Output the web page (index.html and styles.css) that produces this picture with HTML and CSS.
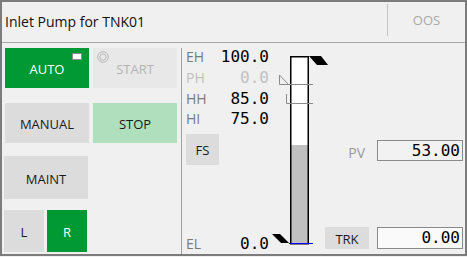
FILE: index.html
```html
<!DOCTYPE html>
<html lang="en">
<head>
<meta charset="UTF-8">
<title>Inlet Pump for TNK01</title>
<link rel="stylesheet" href="styles.css">
</head>
<body>
<div class="panel">
    <div class="header">
        <div class="title">Inlet Pump for TNK01</div>
        <div class="oos">OOS</div>
    </div>
    <div class="content">
        <div class="modes">
            <div class="btn-row first">
                <div class="btn green">AUTO<span class="flag"></span></div>
                <div class="btn off">
                    <svg class="ring" width="12" height="12" viewBox="0 0 12 12">
                        <circle cx="6" cy="6" r="5.3" fill="none" stroke="#b8b8b8" stroke-width="1"/>
                        <circle cx="6" cy="6" r="3.2" fill="none" stroke="#b8b8b8" stroke-width="1"/>
                    </svg>
                    START
                </div>
            </div>
            <div class="btn-row second">
                <div class="btn">MANUAL</div>
                <div class="btn light-green">STOP</div>
            </div>
            <div class="btn-row third">
                <div class="btn tall">MAINT</div>
            </div>
            <div class="btn-row fourth">
                <div class="btn small">L</div>
                <div class="btn small green">R</div>
            </div>
        </div>
        <div class="divider"></div>
        <div class="scale">
            <div class="reading"><span class="lbl">EH</span><span class="val">100.0</span></div>
            <div class="reading dim"><span class="lbl">PH</span><span class="val">0.0</span></div>
            <div class="reading"><span class="lbl">HH</span><span class="val">85.0</span></div>
            <div class="reading"><span class="lbl">HI</span><span class="val">75.0</span></div>
            <div class="btn fs">FS</div>
            <div class="reading bottom"><span class="lbl">EL</span><span class="val">0.0</span></div>
            <!-- bar gauge, drawn in page coordinates -->
            <svg class="gauge" width="150" height="211" viewBox="182 43 150 211">
                <rect x="290.75" y="56.75" width="17.5" height="187" fill="#fff"/>
                <rect x="290.75" y="145" width="17.5" height="98.75" fill="#c0c0c0"/>
                <rect x="290.75" y="56.75" width="17.5" height="187" fill="none" stroke="#000" stroke-width="1.5"/>
                <path d="M279.5 75 V84.5 H313 M279.5 75 L288.5 84.5 M286.5 94 V103.5 H313" fill="none" stroke="#8a8a8a" stroke-width="1"/>
                <polygon points="309,56 321,56 328,65 317,65" fill="#000"/>
                <polygon points="272,234 280,234 289,243 281,243" fill="#000"/>
                <line x1="289" y1="243.5" x2="313" y2="243.5" stroke="#0000ff" stroke-width="1"/>
            </svg>
        </div>
        <div class="values">
            <div class="value-row pv">
                <span class="pv-label">PV</span>
                <div class="box">53.00</div>
            </div>
            <div class="value-row trk">
                <div class="btn trk-btn">TRK</div>
                <div class="box white">0.00</div>
            </div>
        </div>
    </div>
</div>
</body>
</html>
```

FILE: styles.css
```css
body {
    margin: 0;
    background-color: #f0f0f0;
    font-family: "Open Sans", "Noto Sans", sans-serif;
}

.panel {
    width: 467px;
    height: 256px;
    box-sizing: border-box;
    border: 2px solid #7c7c7c;
    display: flex;
    flex-direction: column;
}

.header {
    height: 40px;
    border-bottom: 1px solid #a8a8a8;
    display: flex;
}

.title {
    flex: 1;
    padding-left: 3px;
    font-size: 14px;
    line-height: 40px;
    color: #111;
}

.oos {
    width: 77px;
    height: 32px;
    margin-top: 2px;
    border-left: 1px solid #c4c4c4;
    text-align: center;
    line-height: 32px;
    font-size: 13px;
    color: #a8a8a8;
}

.content {
    flex: 1;
    display: flex;
}

/* left column: mode buttons */
.modes {
    width: 176px;
    padding-left: 3px;
    display: flex;
    flex-direction: column;
}

.btn-row {
    display: flex;
    gap: 4px;
}

.btn-row.first { margin-top: 5px; height: 40px; }
.btn-row.second { margin-top: 15px; height: 40px; }
.btn-row.third { margin-top: 13px; height: 43px; margin-left: -1px; }
.btn-row.fourth { margin-top: 11px; height: 42px; margin-left: -1px; gap: 3px; }

.btn {
    position: relative;
    width: 84px;
    background-color: #dcdcdc;
    color: #1a1a1a;
    font-size: 13px;
    display: flex;
    align-items: center;
    justify-content: center;
    padding-top: 2px;
    box-sizing: border-box;
}

.btn.green {
    background-color: #009933;
    color: #fff;
}

.btn.light-green {
    background-color: #b0dfbe;
}

.btn.off {
    background-color: #e8e8e8;
    color: #b4b4b4;
}

.btn.small {
    width: 40px;
}

.flag {
    position: absolute;
    top: 5px;
    right: 7px;
    width: 8px;
    height: 5px;
    background-color: #fff;
    border: 1px solid #8a8a8a;
}

.ring {
    position: absolute;
    top: 3px;
    left: 4px;
}

.divider {
    width: 1px;
    margin-top: 5px;
    background-color: #a0a0a0;
}

/* middle column: limits and bar */
.scale {
    position: relative;
    width: 140px;
    padding-left: 4px;
    padding-top: 3.5px;
    box-sizing: border-box;
    display: flex;
    flex-direction: column;
}

.reading {
    width: 83px;
    height: 20.67px;
    display: flex;
    justify-content: space-between;
    align-items: center;
}

.lbl {
    font-size: 14px;
    color: #7a7a7a;
}

.val {
    font-family: "DejaVu Sans Mono", "Liberation Mono", monospace;
    font-size: 16px;
    color: #000;
}

.reading.dim .lbl,
.reading.dim .val {
    color: #c0c0c0;
}

.reading.bottom {
    margin-top: auto;
    height: 21px;
}

.btn.fs {
    width: 33px;
    height: 31px;
    margin-top: 4.8px;
}

.gauge {
    position: absolute;
    top: 0;
    left: 0;
}

/* right column: values */
.values {
    flex: 1;
    padding-right: 2px;
    display: flex;
    flex-direction: column;
}

.value-row {
    display: flex;
    justify-content: flex-end;
    align-items: center;
}

.value-row.pv {
    margin-top: 97px;
    height: 21px;
    gap: 12px;
}

.value-row.trk {
    margin-top: auto;
    margin-bottom: 5px;
    height: 22px;
    gap: 8px;
}

.pv-label {
    font-size: 14px;
    color: #9a9a9a;
    padding-top: 3px;
}

.box {
    width: 86px;
    height: 100%;
    box-sizing: border-box;
    border: 1px solid #8a8a8a;
    background-color: #f2f2f2;
    text-align: right;
    padding-right: 2px;
    font-family: "DejaVu Sans Mono", "Liberation Mono", monospace;
    font-size: 16px;
    line-height: 19px;
}

.box.white {
    background-color: #fafafa;
    line-height: 20px;
}

.btn.trk-btn {
    width: 44px;
    height: 22px;
}
```
